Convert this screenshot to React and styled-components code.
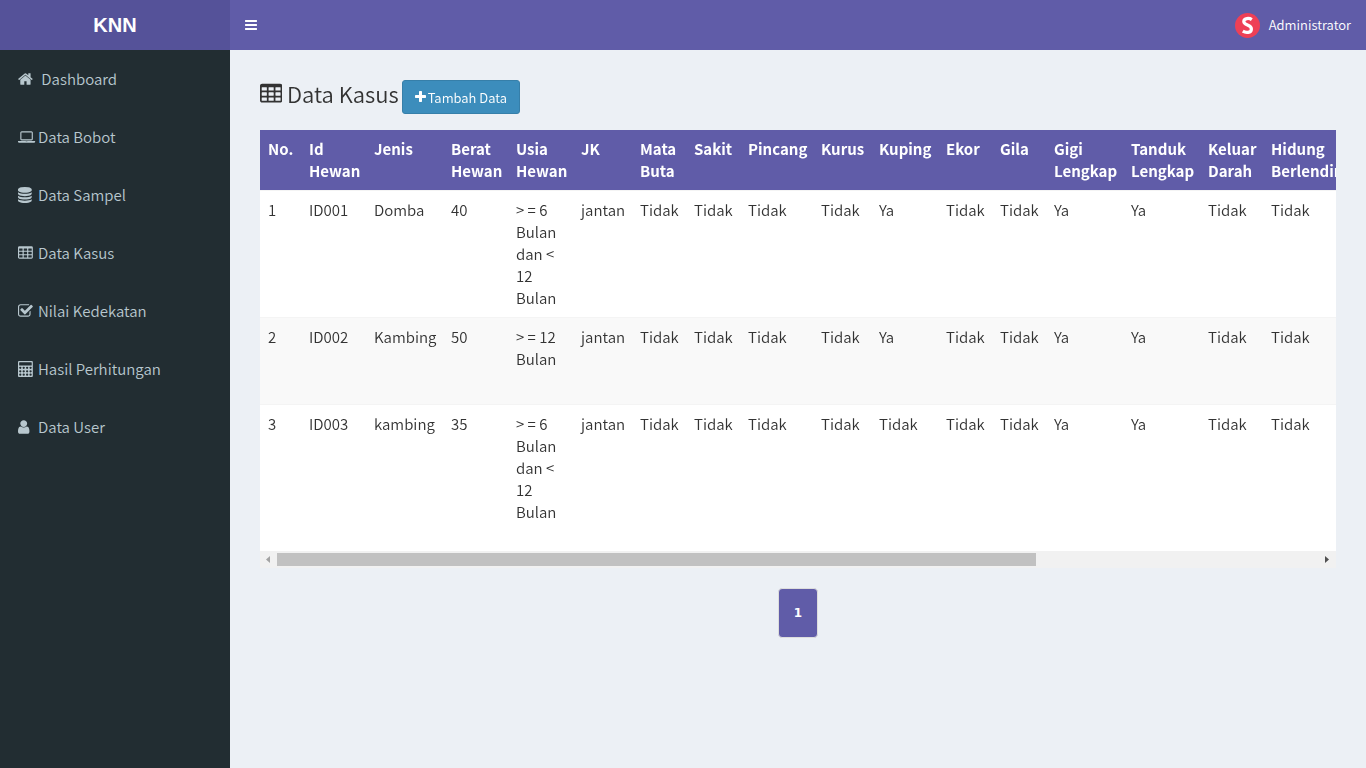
import React, { useEffect, useRef, useState } from "react";
import styled, { createGlobalStyle } from "styled-components";

const GlobalStyle = createGlobalStyle`
  *, *::before, *::after { box-sizing: border-box; }
  html, body, #root { margin: 0; min-height: 100vh; }
  body {
    background: #ecf0f5;
    color: #333;
    font-family: "Noto Sans CJK SC", "Open Sans", sans-serif;
    font-size: 14px;
    line-height: 20px;
  }
`;

const Page = styled.div`
  display: grid;
  grid-template-columns: 230px minmax(0, 1fr);
  grid-template-rows: 50px 1fr;
  min-height: 100vh;
`;

const Logo = styled.a`
  background: #555299;
  color: #fff;
  font: bold 20px/50px "Liberation Sans", Arial, sans-serif;
  text-align: center;
  text-decoration: none;
`;

const TopBar = styled.header`
  display: flex;
  align-items: center;
  justify-content: space-between;
  padding: 0 15px;
  background: #605ca8;
  color: #fff;
`;

const MenuToggle = styled.button`
  display: flex;
  padding: 0;
  border: 0;
  background: none;
  color: inherit;
  cursor: pointer;
`;

const Account = styled.a`
  display: flex;
  align-items: center;
  gap: 9px;
  color: inherit;
  font-size: 13px;
  font-weight: 350;
  text-decoration: none;
`;

const Avatar = styled.svg`
  width: 25px;
  height: 25px;
`;

const Sidebar = styled.nav`
  background: #222d32;
`;

const Menu = styled.ul`
  margin: 0;
  padding: 0;
  list-style: none;
`;

const MenuLink = styled.a`
  display: flex;
  align-items: center;
  height: 58px;
  padding-left: 18px;
  color: #b8c7ce;
  font-size: 15px;
  font-weight: 350;
  text-decoration: none;
  white-space: pre;
`;

const Glyph = styled.svg`
  flex: none;
  width: ${(p) => p.$width}px;
  height: ${(p) => p.$size}px;
  fill: currentColor;
`;

const Content = styled.main`
  padding: 30px;
`;

const Heading = styled.div`
  display: flex;
  align-items: flex-start;
  gap: 3px;
  margin-bottom: 16px;
`;

const Title = styled.h1`
  display: flex;
  align-items: flex-end;
  gap: 5px;
  margin: 0;
  font-size: 22px;
  font-weight: 350;
  line-height: 26px;
`;

const AddButton = styled.button`
  display: flex;
  align-items: center;
  gap: 2px;
  height: 34px;
  padding: 0 12px;
  border: 1px solid #367fa9;
  border-radius: 3px;
  background: #3c8dbc;
  color: #fff;
  font-family: inherit;
  font-size: 13px;
  font-weight: 350;
  cursor: pointer;
`;

const Scroller = styled.div`
  overflow-x: auto;
  padding-bottom: 20px;
  background: #fff;
  scrollbar-width: none;
`;

const Table = styled.table`
  width: 1478px;
  table-layout: fixed;
  border-collapse: collapse;
  font-size: 15px;
  line-height: 22px;
`;

const HeadCell = styled.th`
  padding: 8px;
  background: #605ca8;
  color: #fff;
  font-weight: 700;
  text-align: left;
  vertical-align: top;
`;

const Row = styled.tr`
  height: 87px;
  background: ${(p) => (p.$striped ? "#f9f9f9" : "#fff")};
`;

const Cell = styled.td`
  padding: 8px;
  border-top: 1px solid #f4f4f4;
  font-weight: 350;
  vertical-align: top;
`;

const ScrollBar = styled.div`
  display: flex;
  height: 17px;
  background: #f1f1f1;
`;

const ScrollArrow = styled.button`
  display: flex;
  align-items: center;
  justify-content: center;
  flex: none;
  width: 17px;
  padding: 0;
  border: 0;
  background: none;
  color: ${(p) => (p.$dim ? "#a3a3a3" : "#505050")};
`;

const Track = styled.div`
  flex: 1;
  padding: 2px 0;
`;

const Thumb = styled.div`
  height: 13px;
  background: #c1c1c1;
`;

const Pagination = styled.nav`
  display: flex;
  justify-content: center;
  margin-top: 20px;
`;

const PageLink = styled.a`
  display: flex;
  align-items: center;
  justify-content: center;
  width: 40px;
  height: 50px;
  border: 1px solid #ddd;
  border-radius: 4px;
  background: #605ca8;
  color: #fff;
  font: bold 12px/20px "DejaVu Sans", sans-serif;
  text-decoration: none;
`;

const cells = [192, 704, 1216]
  .flatMap((x) => [384, 768, 1152].map((y) => `M${x - 32} ${y}h320q32 0 32 32v192q0 32-32 32h-320q-32 0-32-32v-192q0-32 32-32z`))
  .join("");

const keys = [256, 640, 1024, 1408]
  .flatMap((x) => [768, 1152, 1536].map((y) => `M${x - 128} ${y}a128 128 0 1 0 256 0a128 128 0 1 0-256 0z`))
  .join("");

const disk = "q237 0 443-43t325-127v170q0 69-103 128t-280 93.5-385 34.5-385-34.5-280-93.5-103-128v-170q119 84 325 127t443 43z";
const bar = "v128q0 26-19 45t-45 19h-1408q-26 0-45-19t-19-45v-128q0-26 19-45t45-19h1408q26 0 45 19t19 45z";

const icons = {
  home: { x: 64, d: "M1472 992v480q0 26-19 45t-45 19h-384v-384h-256v384h-384q-26 0-45-19t-19-45v-480q0-1 .5-3t.5-3l575-474 575 474q1 2 1 6zm223-69l-62 74q-8 9-21 11h-3q-13 0-21-7l-692-577-692 577q-12 8-24 7-13-2-21-11l-62-74q-8-10-7-23.5t11-21.5l719-599q32-26 76-26t76 26l244 204v-195q0-14 9-23t23-9h192q14 0 23 9t9 23v408l219 182q10 8 11 21.5t-7 23.5z" },
  laptop: { x: 0, d: "M416 1280q-66 0-113-47t-47-113v-704q0-66 47-113t113-47h1088q66 0 113 47t47 113v704q0 66-47 113t-113 47h-1088zM384 416v704q0 13 9.5 22.5t22.5 9.5h1088q13 0 22.5-9.5t9.5-22.5v-704q0-13-9.5-22.5t-22.5-9.5h-1088q-13 0-22.5 9.5t-9.5 22.5zM1760 1344h160v96q0 40-47 68t-113 28h-1600q-66 0-113-28t-47-68v-96h1760zM1040 1440q16 0 16-16t-16-16h-160q-16 0-16 16t16 16h160z" },
  database: { x: 0, d: `M768 768${disk}M768 1536${disk}M768 1152${disk}M768 0q208 0 385 34.5t280 93.5 103 128v128q0 69-103 128t-280 93.5-385 34.5-385-34.5-280-93.5-103-128v-128q0-69 103-128t280-93.5 385-34.5z` },
  table: { x: 0, d: `M1664 288v1088q0 66-47 113t-113 47h-1344q-66 0-113-47t-47-113v-1088q0-66 47-113t113-47h1344q66 0 113 47t47 113z${cells}` },
  check: { x: 64, d: "M1472 930v318q0 119-84.500 203.500t-203.500 84.500h-832q-119 0-203.500-84.500t-84.500-203.500v-832q0-119 84.500-203.500t203.500-84.500h832q63 0 117 25 15 7 18 23 3 17-9 29l-49 49q-10 10-23 10-3 0-9-2-23-6-45-6h-832q-66 0-113 47t-47 113v832q0 66 47 113t113 47h832q66 0 113-47t47-113v-254q0-13 9-22l64-64q10-10 23-10 6 0 12 3 20 8 20 29zm231-489l-814 814q-24 24-57 24t-57-24l-430-430q-24-24-24-57t24-57l110-110q24-24 57-24t57 24l263 263 647-647q24-24 57-24t57 24l110 110q24 24 24 57t-24 57z" },
  calculator: { x: 0, d: `M128 0h1408q53 0 90.500 37.500t37.500 90.500v1536q0 53-37.500 90.500t-90.500 37.500h-1408q-53 0-90.500-37.500t-37.500-90.500v-1536q0-53 37.500-90.500t90.500-37.500zM192 128q-64 0-64 64v256q0 64 64 64h1280q64 0 64-64v-256q0-64-64-64z${keys}` },
  user: { x: 256, d: "M1536 1399q0 109-62.500 187t-150.500 78h-854q-88 0-150.500-78t-62.500-187q0-85 8.500-160.500t31.500-152 58.500-131 94-89 134.500-34.500q131 128 313 128t313-128q76 0 134.500 34.500t94 89 58.500 131 31.500 152 8.500 160.500zm-256-887q0 159-112.500 271.500t-271.500 112.500-271.500-112.500-112.500-271.500 112.500-271.500 271.500-112.500 271.500 112.500 112.500 271.500z" },
  bars: { x: 128, d: `M1664 1344${bar}M1664 832${bar}M1664 320${bar}` },
  plus: { x: 192, d: "M1600 736v192q0 40-28 68t-68 28h-416v416q0 40-28 68t-68 28h-192q-40 0-68-28t-28-68v-416h-416q-40 0-68-28t-28-68v-192q0-40 28-68t68-28h416v-416q0-40 28-68t68-28h192q40 0 68 28t28 68v416h416q40 0 68 28t28 68z" },
};

function Icon({ name, size, width }) {
  const { x, d } = icons[name];
  return (
    <Glyph $size={size} $width={width} viewBox={`${x} 0 ${(width / size) * 1792} 1792`} aria-hidden="true">
      <path fillRule="evenodd" d={d} />
    </Glyph>
  );
}

const menu = [
  ["home", "\u00a0Dashboard"],
  ["laptop", "Data Bobot"],
  ["database", "Data Sampel"],
  ["table", "Data Kasus"],
  ["check", "Nilai Kedekatan"],
  ["calculator", "Hasil Perhitungan"],
  ["user", "Data User"],
];

const columns = [
  ["No.", 41], ["Id Hewan", 65], ["Jenis", 77], ["Berat Hewan", 65], ["Usia Hewan", 65],
  ["JK", 59], ["Mata Buta", 54], ["Sakit", 54], ["Pincang", 73], ["Kurus", 58],
  ["Kuping", 67], ["Ekor", 54], ["Gila", 54], ["Gigi Lengkap", 77], ["Tanduk Lengkap", 77],
  ["Keluar Darah", 63], ["Hidung Berlendir", 84], ["", 391],
];

const T = "Tidak";
const rows = [
  ["1", "ID001", "Domba", "40", "> = 6 Bulan dan < 12 Bulan", "jantan", T, T, T, T, "Ya", T, T, "Ya", "Ya", T, T, ""],
  ["2", "ID002", "Kambing", "50", "> = 12 Bulan", "jantan", T, T, T, T, "Ya", T, T, "Ya", "Ya", T, T, ""],
  ["3", "ID003", "kambing", "35", "> = 6 Bulan dan < 12 Bulan", "jantan", T, T, T, T, T, T, T, "Ya", "Ya", T, T, ""],
];

function CaseTable() {
  const scroller = useRef(null);
  const [view, setView] = useState({ left: 0, visible: 1, total: 1 });

  const measure = () => {
    const el = scroller.current;
    setView({ left: el.scrollLeft, visible: el.clientWidth, total: el.scrollWidth });
  };

  useEffect(() => {
    measure();
    window.addEventListener("resize", measure);
    return () => window.removeEventListener("resize", measure);
  }, []);

  const move = (by) => scroller.current.scrollBy({ left: by });

  return (
    <section>
      <Scroller ref={scroller} onScroll={measure}>
        <Table>
          <colgroup>
            {columns.map(([, width], i) => <col key={i} width={width} />)}
          </colgroup>
          <thead>
            <tr>{columns.map(([label], i) => <HeadCell key={i} scope="col">{label}</HeadCell>)}</tr>
          </thead>
          <tbody>
            {rows.map((row, r) => (
              <Row key={r} $striped={r % 2 === 1}>
                {row.map((value, i) => <Cell key={i}>{value}</Cell>)}
              </Row>
            ))}
          </tbody>
        </Table>
      </Scroller>
      <ScrollBar>
        <ScrollArrow $dim={view.left === 0} aria-label="Scroll left" onClick={() => move(-80)}>
          <svg width="5" height="7" viewBox="0 0 5 7" fill="currentColor"><path d="M4 0v7L0 3.500z" /></svg>
        </ScrollArrow>
        <Track>
          <Thumb
            style={{
              width: `${(view.visible / view.total) * 100}%`,
              marginLeft: `${(view.left / view.total) * 100}%`,
            }}
          />
        </Track>
        <ScrollArrow aria-label="Scroll right" onClick={() => move(80)}>
          <svg width="5" height="7" viewBox="0 0 5 7" fill="currentColor"><path d="M0 0v7l4-3.500z" /></svg>
        </ScrollArrow>
      </ScrollBar>
    </section>
  );
}

export default function App() {
  return (
    <>
      <GlobalStyle />
      <Page>
        <Logo href="#">KNN</Logo>
        <TopBar>
          <MenuToggle aria-label="Menu"><Icon name="bars" size={14} width={12} /></MenuToggle>
          <Account href="#">
            <Avatar viewBox="0 0 25 25" aria-hidden="true">
              <circle cx="12.500" cy="12.500" r="12.500" fill="#ee4056" />
              <path d="M16.800 6.600C14.500 5 8.800 4.700 8.800 8.600C8.800 12.700 16.400 11.500 16.400 15.900C16.400 20.200 10.600 20 7.800 18.200" fill="none" stroke="#fff" strokeWidth="3.200" />
            </Avatar>
            Administrator
          </Account>
        </TopBar>
        <Sidebar>
          <Menu>
            {menu.map(([icon, label]) => (
              <li key={icon}>
                <MenuLink href="#"><Icon name={icon} size={16} width={20} />{label}</MenuLink>
              </li>
            ))}
          </Menu>
        </Sidebar>
        <Content>
          <Heading>
            <Title><Icon name="table" size={24} width={22} />Data Kasus</Title>
            <AddButton><Icon name="plus" size={14} width={11} />Tambah Data</AddButton>
          </Heading>
          <CaseTable />
          <Pagination aria-label="Pages"><PageLink href="#">1</PageLink></Pagination>
        </Content>
      </Page>
    </>
  );
}
